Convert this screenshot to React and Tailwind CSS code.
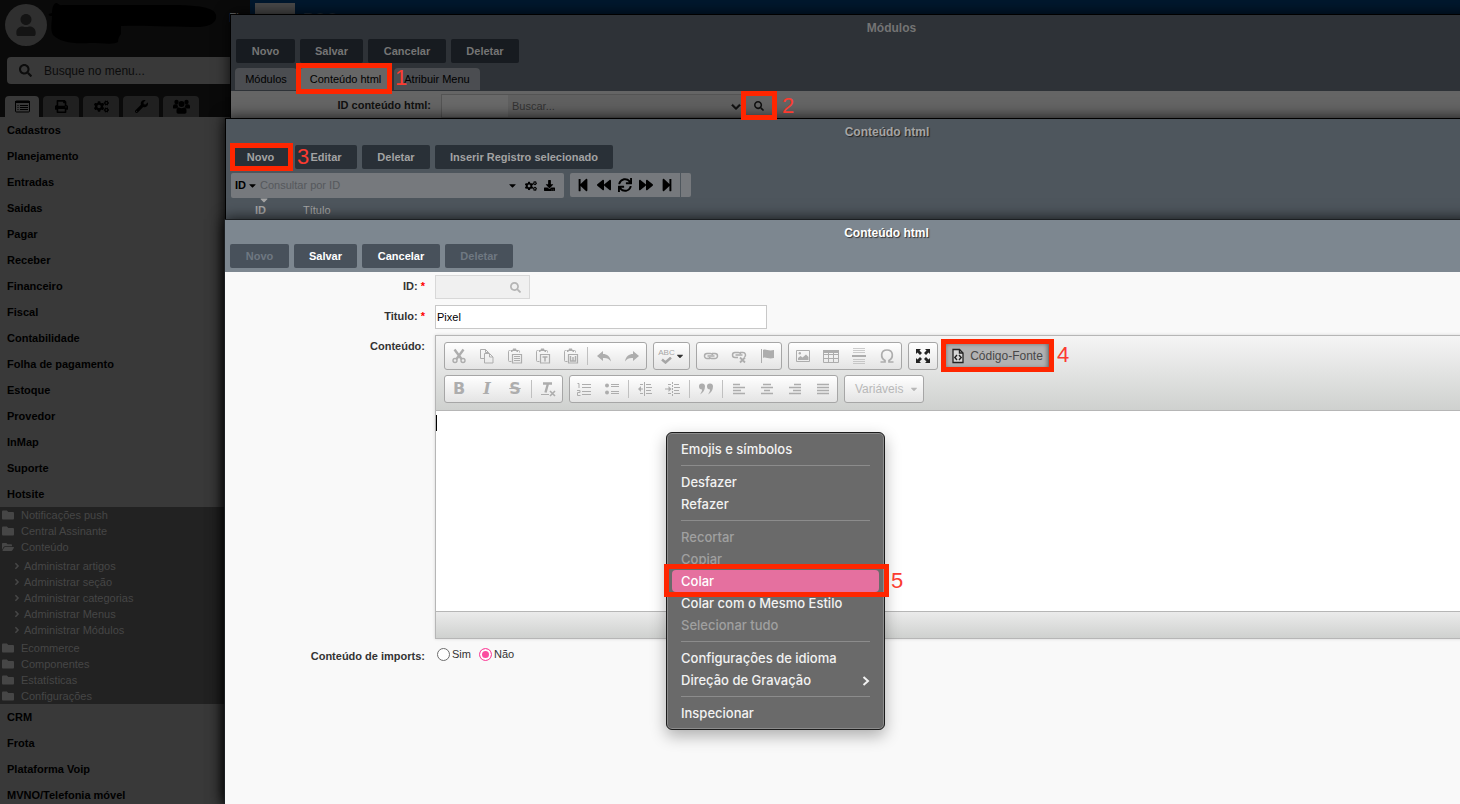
import React, { useState } from 'react';
import clsx from 'clsx';
import {
  FaAngleRight,
  FaBackward,
  FaCaretDown,
  FaChevronDown,
  FaCogs,
  FaDownload,
  FaFolder,
  FaFolderOpen,
  FaForward,
  FaPrint,
  FaSearch,
  FaStepBackward,
  FaStepForward,
  FaSync,
  FaUser,
  FaWrench,
} from 'react-icons/fa';

const menuTop = [
  'Cadastros',
  'Planejamento',
  'Entradas',
  'Saidas',
  'Pagar',
  'Receber',
  'Financeiro',
  'Fiscal',
  'Contabilidade',
  'Folha de pagamento',
  'Estoque',
  'Provedor',
  'InMap',
  'Suporte',
  'Hotsite',
];

const menuBottom = ['CRM', 'Frota', 'Plataforma Voip', 'MVNO/Telefonia móvel'];

const hotsite = [
  { label: 'Notificações push' },
  { label: 'Central Assinante' },
  {
    label: 'Conteúdo',
    items: [
      'Administrar artigos',
      'Administrar seção',
      'Administrar categorias',
      'Administrar Menus',
      'Administrar Módulos',
    ],
  },
  { label: 'Ecommerce' },
  { label: 'Componentes' },
  { label: 'Estatísticas' },
  { label: 'Configurações' },
];

const ListIcon = () => (
  <svg width="15" height="13" viewBox="0 0 15 13" fill="none" stroke="currentColor">
    <rect x=".5" y="1" width="14" height="11" rx="1" />
    <path d="M0 2h15" strokeWidth="2" />
    <path d="M2.500 5.500h1M2.500 7.500h1M2.500 9.500h1M5 5.500h8M5 7.500h8M5 9.500h8" />
  </svg>
);

const GroupIcon = () => (
  <svg width="17" height="15" viewBox="0 0 17 15" fill="currentColor">
    <circle cx="3.500" cy="3" r="2.200" />
    <circle cx="13.500" cy="3" r="2.200" />
    <circle cx="8.500" cy="5" r="3" />
    <path d="M0 9V7.500C0 6 1 5.300 2 5.300h2.500c0 1.500.5 2.500 1.200 3.200-.9 0-1.700.5-2.200 1H1a1 1 0 0 1-1-.5zM17 9V7.500c0-1.500-1-2.200-2-2.200h-2.500c0 1.500-.5 2.500-1.200 3.200.9 0 1.700.5 2.200 1H16a1 1 0 0 0 1-.5z" />
    <path d="M3.500 13v-1.500c0-1.800 1-2.900 2.500-2.900 1.600 1 3.400 1 5 0 1.500 0 2.500 1.100 2.500 2.900V13c0 1-.7 1.700-1.700 1.700H5.200c-1 0-1.700-.7-1.700-1.700z" />
  </svg>
);

const sidebarTabs = [
  { name: 'Menu', icon: <ListIcon /> },
  { name: 'Impressão', icon: <FaPrint size={13} /> },
  { name: 'Configurar', icon: <FaCogs size={15} /> },
  { name: 'Ferramentas', icon: <FaWrench size={13} /> },
  { name: 'Usuários', icon: <GroupIcon /> },
];

const contextMenu = [
  [{ label: 'Emojis e símbolos' }],
  [{ label: 'Desfazer' }, { label: 'Refazer' }],
  [
    { label: 'Recortar', off: true },
    { label: 'Copiar', off: true },
    { label: 'Colar', active: true },
    { label: 'Colar com o Mesmo Estilo' },
    { label: 'Selecionar tudo', off: true },
  ],
  [{ label: 'Configurações de idioma' }, { label: 'Direção de Gravação', more: true }],
  [{ label: 'Inspecionar' }],
];

/* ---------- editor icons ---------- */

const Svg = ({ children }) => (
  <svg width="16" height="16" viewBox="0 0 16 16" fill="none" stroke="currentColor">
    {children}
  </svg>
);

const Clipboard = ({ children }) => (
  <Svg>
    <path d="M3.500 2.500h-1a1 1 0 0 0-1 1v9a1 1 0 0 0 1 1h2M10.500 2.500h1a1 1 0 0 1 1 1v1" />
    <path d="M4 4V2h1.500l.5-1.500h3l.5 1.500H11v2H9.500V3h-4v1z" fill="currentColor" stroke="none" />
    <path d="M5.500 6.500h9v8.500h-9z" strokeWidth="1.200" />
    {children}
  </Svg>
);

const icons = {
  cut: (
    <Svg>
      <path d="M3.500 1.500 10.500 11M12.500 1.500 5.500 11" strokeWidth="2.400" />
      <circle cx="4" cy="12.500" r="2" strokeWidth="1.400" />
      <circle cx="12" cy="12.500" r="2" strokeWidth="1.400" />
    </Svg>
  ),
  copy: (
    <Svg>
      <path d="M5.500 10.500h-4v-9h5l3 3v1M6.500 1.500v3h3" />
      <path d="M5.500 5.500h5l3.500 3.500v6h-8.500zM10.500 5.500v3.500h3.500" />
    </Svg>
  ),
  paste: (
    <Clipboard>
      <path d="M7 8.500h6M7 10.500h6M7 12.500h6" />
    </Clipboard>
  ),
  pasteText: (
    <Clipboard>
      <path d="M7.500 9h5M10 9v4.500" strokeWidth="1.500" />
    </Clipboard>
  ),
  pasteWord: (
    <Clipboard>
      <path d="M7.500 8v5h5V8M10 9v4" strokeWidth="1.400" />
    </Clipboard>
  ),
  undo: (
    <Svg>
      <path d="M1 8l6-5v3c4 0 7 2 8 7.500-2-3-4.500-3.800-8-3.500v3z" fill="currentColor" stroke="none" />
    </Svg>
  ),
  redo: (
    <Svg>
      <path d="M15 8l-6-5v3c-4 0-7 2-8 7.500 2-3 4.500-3.800 8-3.500v3z" fill="currentColor" stroke="none" />
    </Svg>
  ),
  link: (
    <Svg>
      <path d="M7 10.500H4a2.500 2.500 0 0 1 0-5h3.500a2.500 2.500 0 0 1 2.200 1.500M9 5.500h3a2.500 2.500 0 0 1 0 5H8.500A2.500 2.500 0 0 1 6.300 9" strokeWidth="1.500" />
      <path d="M4.500 8h7" strokeWidth="1.500" />
    </Svg>
  ),
  unlink: (
    <Svg>
      <path d="M7 9.500H4a2.500 2.500 0 0 1 0-5h3.500a2.500 2.500 0 0 1 2.200 1.500M9 4.500h3a2.500 2.500 0 0 1 1.500 4.500M4.500 7h7" strokeWidth="1.500" />
      <path d="M9 9.500l5 5M14 9.500l-5 5" strokeWidth="1.800" />
    </Svg>
  ),
  flag: (
    <Svg>
      <path d="M2.500 1v14" />
      <path d="M4 2c3-1.500 5 1.500 11 0v8c-6 1.500-8-1.500-11 0z" fill="currentColor" stroke="none" />
    </Svg>
  ),
  image: (
    <Svg>
      <path d="M1.500 2.500h13v11h-13z" />
      <path d="M3 12v-2l2.500-2 2 1.500 3.500-3 2.500 2.500v3z" fill="currentColor" stroke="none" />
      <circle cx="4.800" cy="5.300" r="1.200" fill="currentColor" stroke="none" />
    </Svg>
  ),
  table: (
    <Svg>
      <path d="M.5 2.500h15v12H.5zM.5 6.500h15M.5 10.500h15M5.500 4v10M10.500 4v10" />
      <path d="M0 2h16v3H0z" fill="currentColor" stroke="none" />
    </Svg>
  ),
  rule: (
    <Svg>
      <path d="M2 .5h12M2 2.500h12M2 4.500h12M2 11.500h12M2 13.500h12M2 15.500h12" opacity="0.6" />
      <path d="M1 8h14" strokeWidth="2" />
    </Svg>
  ),
  omega: (
    <Svg>
      <path
        d="M1.500 14h4.500v-1.500C3.500 11 2.500 9 2.700 6.500 3 3.500 5.300 2 8 2s5 1.500 5.300 4.500c.2 2.500-.8 4.500-3.300 6V14h4.500"
        strokeWidth="1.700"
      />
    </Svg>
  ),
  expand: (
    <Svg>
      <path
        d="M1 1h5L4.500 2.500 7 5 5 7 2.500 4.500 1 6zM15 1v5l-1.500-1.500L11 7 9 5l2.500-2.500L10 1zM1 15v-5l1.500 1.500L5 9l2 2-2.500 2.500L6 15zM15 15h-5l1.500-1.500L9 11l2-2 2.500 2.500L15 10z"
        fill="currentColor"
        stroke="none"
      />
    </Svg>
  ),
  source: (
    <Svg>
      <path d="M3 1.500h6.500l3.500 3.500v9.500H3z" fill="#d8d8d8" strokeWidth="1.300" />
      <path d="M9.500 1.500V5H13M7 7 4.800 9.500 7 12M9 7l2.200 2.500L9 12" strokeWidth="1.400" />
    </Svg>
  ),
  numbered: (
    <Svg>
      <path d="M1.500 2.500H3v4.500M1 9.500h3v2H1.500v3h3" />
      <path d="M6 3.500h9M6 6.500h9M6 10.500h9M6 13.500h9" />
    </Svg>
  ),
  bulleted: (
    <Svg>
      <circle cx="3" cy="4.500" r="2" fill="currentColor" stroke="none" />
      <circle cx="3" cy="11.500" r="2" fill="currentColor" stroke="none" />
      <path d="M7 3.500h8M7 5.500h8M7 10.500h8M7 12.500h8" />
    </Svg>
  ),
  outdent: (
    <Svg>
      <path d="M7.500 1v14" />
      <path d="M9 3.500h5M9 6.500h6M9 9.500h5M9 12.500h6M2 8h4M3 3.500h3M3 12.500h3" />
      <path d="M4 5 1 8l3 3z" fill="currentColor" stroke="none" />
    </Svg>
  ),
  indent: (
    <Svg>
      <path d="M7.500 1v14" strokeDasharray="2 1" />
      <path d="M9 3.500h5M9 6.500h6M9 9.500h5M9 12.500h6M0 8h4M3 3.500h3M3 12.500h3" />
      <path d="M3.500 5l3 3-3 3z" fill="currentColor" stroke="none" />
    </Svg>
  ),
  quote: (
    <Svg>
      <path
        d="M1 5.500a3 3 0 0 1 6-.2C7 9 5 12 2 13.500c1.500-2 2-3.500 2-5a3 3 0 0 1-3-3zM9 5.500a3 3 0 0 1 6-.2c0 3.700-2 6.700-5 8.200 1.500-2 2-3.500 2-5a3 3 0 0 1-3-3z"
        fill="currentColor"
        stroke="none"
      />
    </Svg>
  ),
  left: (
    <Svg>
      <path d="M2 3.500h7M2 6.500h12M2 9.500h8M2 12.500h12" strokeWidth="1.600" />
    </Svg>
  ),
  center: (
    <Svg>
      <path d="M4 3.500h8M2 6.500h12M5 9.500h6M2 12.500h12" strokeWidth="1.600" />
    </Svg>
  ),
  right: (
    <Svg>
      <path d="M7 3.500h7M2 6.500h12M6 9.500h8M2 12.500h12" strokeWidth="1.600" />
    </Svg>
  ),
  justify: (
    <Svg>
      <path d="M2 3.500h12M2 6.500h12M2 9.500h12M2 12.500h12" strokeWidth="1.600" />
    </Svg>
  ),
  bold: <span className="font-['DejaVu_Sans'] text-base leading-4 font-bold">B</span>,
  italic: <span className="font-['DejaVu_Serif'] text-base leading-4 font-bold italic">I</span>,
  strike: <span className="font-['DejaVu_Sans'] text-base leading-4 font-bold line-through">S</span>,
  clear: (
    <Svg>
      <path d="M3 2.500h9M8 2.500l-2.500 9" strokeWidth="2.400" />
      <path d="M1 13.500h8" />
      <path d="M10 10l5 5M15 10l-5 5" strokeWidth="1.600" />
    </Svg>
  ),
};

const Tool = ({ name, title, dark }) => (
  <button
    type="button"
    aria-label={title}
    className={clsx(
      'flex h-[26px] w-7 items-center justify-center',
      dark ? 'text-[#222222]' : 'text-[#adadad]',
    )}
  >
    {icons[name]}
  </button>
);

const ToolGroup = ({ children }) => (
  <div className="flex h-7 items-center rounded-[3px] border border-[#a6a6a6] bg-linear-to-b from-white to-[#e4e4e4]">
    {children}
  </div>
);

const Sep = () => <span className="mx-[2px] h-[18px] w-px bg-[#c0c0c0]" />;

/* ---------- window parts ---------- */

const WindowTitle = ({ children, className }) => (
  <h2 className={clsx('pt-[5px] text-center text-xs leading-4 font-bold', className)}>{children}</h2>
);

const ActionButton = ({ children, className, disabled }) => (
  <button
    type="button"
    disabled={disabled}
    className={clsx('h-6 rounded-xs text-[11px] font-bold whitespace-nowrap', className)}
  >
    {children}
  </button>
);

const Marker = ({ box, number, place }) => (
  <>
    <div className={clsx('pointer-events-none absolute z-40 border-5 border-[#ff2600]', box)} />
    <span
      className={clsx(
        'pointer-events-none absolute z-40 text-[22px] leading-6 text-[#fb3b30]',
        place,
      )}
    >
      {number}
    </span>
  </>
);

const Sidebar = () => (
  <aside className="flex w-[250px] shrink-0 flex-col bg-[#0a0a0a]">
    <div className="relative h-[57px] shrink-0">
      <div className="ml-[5px] pt-1">
        <div className="flex size-[42px] items-center justify-center rounded-full bg-[#2f2f2f] text-[#141414]">
          <FaUser size={22} />
        </div>
      </div>
      <svg className="absolute top-0 left-12" width="175" height="48" viewBox="0 0 175 48">
        <path
          d="M8 3c2 0 3 3 6 2h118c14 1 34 1 36 10 1 8-6 11-16 12-26 0-56-2-79-1v8c-2 2-3 5-3 8-4 3-16 1-28 1-18 1-30-1-37-8-3-6-1-13-1-19-4 0-5-2 0-3 0-4 1-9 4-10z"
          fill="#000"
        />
      </svg>
      <span className="absolute top-[10px] left-[229px] text-xs text-[#6b6b6b]">Fi</span>
    </div>
    <label className="ml-[7px] flex h-[27px] shrink-0 items-center gap-3 rounded-l-sm bg-[#393939] pl-3 text-[#0c0c0c]">
      <FaSearch size={13} />
      <input
        type="text"
        aria-label="Busque no menu"
        placeholder="Busque no menu..."
        className="w-40 bg-transparent text-xs outline-none placeholder:text-[#0c0c0c]"
      />
    </label>
    <div className="mt-3 flex h-[21px] shrink-0 gap-1 pl-[5px]">
      {sidebarTabs.map((tab, i) => (
        <button
          key={tab.name}
          type="button"
          aria-label={tab.name}
          className={clsx(
            'flex items-center justify-center rounded-t-sm text-black',
            i === 0 ? 'w-[34px] bg-[#393939]' : 'w-9 bg-[#202020]',
          )}
        >
          {tab.icon}
        </button>
      ))}
    </div>
    <nav className="flex-1 bg-[#393939] text-[11px] text-black">
      {menuTop.map((item) => (
        <a key={item} href="#" className="block h-[26px] pl-[7px] leading-[26px] font-bold">
          {item}
        </a>
      ))}
      <div className="bg-[#222222] text-[#464646]">
        {hotsite.map((folder) => (
          <div key={folder.label}>
            <a href="#" className="flex h-4 items-center gap-[7px] pl-[2px]">
              {folder.items ? <FaFolderOpen size={12} /> : <FaFolder size={12} />}
              {folder.label}
            </a>
            {folder.items && (
              <div className="pt-[3px] pb-[2px]">
                {folder.items.map((sub) => (
                  <a key={sub} href="#" className="flex h-4 items-center gap-[2px] pl-3">
                    <FaAngleRight size={10} />
                    {sub}
                  </a>
                ))}
              </div>
            )}
          </div>
        ))}
      </div>
      {menuBottom.map((item) => (
        <a key={item} href="#" className="block h-[26px] pl-[7px] leading-[26px] font-bold">
          {item}
        </a>
      ))}
    </nav>
  </aside>
);

const ModulesWindow = () => {
  const button = 'bg-[#171b20] text-[#757575]';
  return (
    <section className="absolute top-[14px] -right-[93px] bottom-0 left-[230px] border border-black bg-[#2e3237] shadow-[0_0_14px_rgba(0,0,0,0.8)]">
      <WindowTitle className="text-[#747474]">Módulos</WindowTitle>
      <div className="mt-[3px] flex gap-[5px] pl-[5px]">
        <ActionButton className={clsx(button, 'w-[59px]')}>Novo</ActionButton>
        <ActionButton className={clsx(button, 'w-[63px]')}>Salvar</ActionButton>
        <ActionButton className={clsx(button, 'w-[78px]')}>Cancelar</ActionButton>
        <ActionButton className={clsx(button, 'w-[68px]')}>Deletar</ActionButton>
      </div>
      <div className="mt-[5px] flex gap-[2px] pl-1 text-[11px] text-black">
        <button type="button" className="h-[22px] w-[62px] rounded-t-sm bg-[#4b4d51]">
          Módulos
        </button>
        <button type="button" className="h-[23px] w-[93px] rounded-t-sm bg-[#666666]">
          Conteúdo html
        </button>
        <button type="button" className="h-[22px] w-[86px] rounded-t-sm bg-[#4b4d51]">
          Atribuir Menu
        </button>
      </div>
      <div className="flex h-[200px] items-start bg-[#656565] pt-[3px] text-[11px]">
        <label htmlFor="id-html" className="w-[200px] text-right leading-[22px] font-bold text-[#111111]">
          ID conteúdo html:
        </label>
        <div className="ml-[10px] flex border border-[#545454]">
          <input id="id-html" type="text" className="h-[22px] w-[66px] bg-[#696969] outline-none" />
          <div className="relative">
            <select
              aria-label="Buscar conteúdo"
              className="h-[22px] w-[234px] appearance-none bg-[#606060] pl-1 text-[#333333] outline-none"
            >
              <option>Buscar...</option>
            </select>
            <FaChevronDown
              size={10}
              stroke="currentColor"
              strokeWidth={30}
              className="pointer-events-none absolute top-[7px] right-px text-[#111111]"
            />
          </div>
          <button type="button" aria-label="Pesquisar" className="flex h-[22px] w-[34px] items-center justify-center text-[#111111]">
            <FaSearch size={10} />
          </button>
        </div>
      </div>
    </section>
  );
};

const ListWindow = () => {
  const button = 'bg-[#293037] text-[#a3a3a3]';
  return (
    <section className="absolute top-[118px] -right-[89px] bottom-0 left-[225px] border border-black bg-[#4e565d] shadow-[0_0_14px_rgba(0,0,0,0.8)]">
      <WindowTitle className="text-[#a5a5a5] text-shadow-[1px_1px_1px_#222]">Conteúdo html</WindowTitle>
      <div className="mt-[5px] flex gap-[5px] pl-[5px]">
        <ActionButton className={clsx(button, 'w-[59px]')}>Novo</ActionButton>
        <ActionButton className={clsx(button, 'w-[62px]')}>Editar</ActionButton>
        <ActionButton className={clsx(button, 'w-[68px]')}>Deletar</ActionButton>
        <ActionButton className={clsx(button, 'w-[178px]')}>Inserir Registro selecionado</ActionButton>
      </div>
      <div className="mt-1 flex gap-[6px] pl-[5px] text-black">
        <div className="flex h-[25px] w-[333px] items-center rounded-xs bg-[#76797d] px-1 text-[11px]">
          <button type="button" className="flex items-center gap-px font-bold">
            ID <FaCaretDown size={11} />
          </button>
          <input
            type="text"
            aria-label="Consultar por ID"
            placeholder="Consultar por ID"
            className="min-w-0 flex-1 bg-transparent pl-[2px] outline-none placeholder:text-[#55585c]"
          />
          <div className="flex items-center gap-[7px] pr-[5px]">
            <FaCaretDown size={11} />
            <FaCogs size={12} />
            <FaDownload size={11} />
          </div>
        </div>
        <div className="flex h-6 items-center rounded-xs bg-[#76797d]">
          <div className="flex w-[110px] items-center justify-between px-[6px]">
            <button type="button" aria-label="Primeiro"><FaStepBackward size={14} /></button>
            <button type="button" aria-label="Anterior"><FaBackward size={14} /></button>
            <button type="button" aria-label="Atualizar"><FaSync size={14} /></button>
            <button type="button" aria-label="Próximo"><FaForward size={14} /></button>
            <button type="button" aria-label="Último"><FaStepForward size={14} /></button>
          </div>
          <span className="h-full w-[11px] border-l border-[#4e565d]" />
        </div>
      </div>
      <FaCaretDown size={12} className="-mt-1 -mb-[2px] ml-8 text-[#a5a5a5]" />
      <table className="text-[11px] leading-3 text-[#a5a5a5]">
        <thead>
          <tr>
            <th className="w-[77px] pl-[29px] text-left font-bold">ID</th>
            <th className="text-left font-normal">Título</th>
          </tr>
        </thead>
      </table>
    </section>
  );
};

const Editor = () => (
  <div className="flex-1 border border-[#b6b6b6] bg-white shadow-[0_0_3px_rgba(0,0,0,0.15)]">
    <div className="border-b border-[#b6b6b6] bg-linear-to-b from-[#f5f5f5] to-[#cfd1cf] px-2 pt-[6px] pb-[7px]">
      <div className="flex gap-[6px]">
        <ToolGroup>
          <Tool name="cut" title="Recortar" />
          <Tool name="copy" title="Copiar" />
          <Tool name="paste" title="Colar" />
          <Tool name="pasteText" title="Colar como Texto" />
          <Tool name="pasteWord" title="Colar do Word" />
          <Sep />
          <Tool name="undo" title="Desfazer" />
          <Tool name="redo" title="Refazer" />
        </ToolGroup>
        <ToolGroup>
          <button type="button" aria-label="Verificar ortografia" className="flex h-[26px] w-[35px] items-center justify-center text-[#a6a6a6]">
            <span className="flex flex-col items-center">
              <span className="text-[8px] leading-[8px]">ABC</span>
              <svg width="11" height="7" viewBox="0 0 11 7" fill="none" stroke="currentColor" strokeWidth="2.500">
                <path d="M1 2.500 4.500 5.500 10 .5" />
              </svg>
            </span>
            <FaCaretDown size={10} className="text-[#333333]" />
          </button>
        </ToolGroup>
        <ToolGroup>
          <Tool name="link" title="Inserir link" />
          <Tool name="unlink" title="Remover link" />
          <Tool name="flag" title="Âncora" />
        </ToolGroup>
        <ToolGroup>
          <Tool name="image" title="Imagem" />
          <Tool name="table" title="Tabela" />
          <Tool name="rule" title="Linha horizontal" />
          <Tool name="omega" title="Caractere especial" />
        </ToolGroup>
        <ToolGroup>
          <Tool name="expand" title="Maximizar" dark />
        </ToolGroup>
        <button
          type="button"
          className="flex h-7 w-[105px] items-center justify-center gap-1 border border-[#777777] bg-[#b2b2b2] text-xs text-[#484848] shadow-[inset_0_0_5px_rgba(0,0,0,0.5)]"
        >
          <span className="text-[#222222]">{icons.source}</span>
          Código-Fonte
        </button>
      </div>
      <div className="mt-[5px] flex gap-[6px]">
        <ToolGroup>
          <Tool name="bold" title="Negrito" />
          <Tool name="italic" title="Itálico" />
          <Tool name="strike" title="Tachado" />
          <Sep />
          <Tool name="clear" title="Remover formatação" />
        </ToolGroup>
        <ToolGroup>
          <Tool name="numbered" title="Lista numerada" />
          <Tool name="bulleted" title="Lista sem números" />
          <Sep />
          <Tool name="outdent" title="Diminuir recuo" />
          <Tool name="indent" title="Aumentar recuo" />
          <Sep />
          <Tool name="quote" title="Citação" />
          <Sep />
          <Tool name="left" title="Alinhar à esquerda" />
          <Tool name="center" title="Centralizar" />
          <Tool name="right" title="Alinhar à direita" />
          <Tool name="justify" title="Justificado" />
        </ToolGroup>
        <ToolGroup>
          <button type="button" className="flex h-[26px] w-[78px] items-center justify-between pr-1 pl-[10px] text-xs text-[#b8b8b8]">
            Variáveis <FaCaretDown size={10} />
          </button>
        </ToolGroup>
      </div>
    </div>
    <div className="relative">
      <textarea
        id="conteudo"
        className="block h-[200px] w-full resize-none bg-white px-1 outline-none"
      />
      <span className="absolute top-1 left-0 h-4 w-px bg-black" />
    </div>
    <div className="h-[27px] border-t border-[#b6b6b6] bg-linear-to-b from-[#ebebeb] to-[#cfd1cf]" />
  </div>
);

const FormRow = ({ label, htmlFor, required, children }) => (
  <div className="flex gap-[10px]">
    <label htmlFor={htmlFor} className="w-[200px] shrink-0 text-right leading-[22px] font-bold text-[#333333]">
      {label}:{required && <span className="text-[#ff0000]"> *</span>}
    </label>
    {children}
  </div>
);

const FormWindow = () => {
  const [title, setTitle] = useState('Pixel');
  const [imports, setImports] = useState('nao');
  const button = 'bg-[#48515b]';
  const radio =
    'size-[13px] appearance-none rounded-full border border-[#6e6e6e] bg-white checked:border-[#fb4ea0] checked:bg-[#fb4ea0] checked:shadow-[inset_0_0_0_2px_white]';

  return (
    <section className="absolute top-[219px] -right-[88px] bottom-0 left-[224px] border-t border-l border-[#1c1f22] bg-[#f9f9f9] text-[11px] shadow-[0_0_14px_rgba(0,0,0,0.8)]">
      <header className="bg-[#7d8790] pb-1">
        <WindowTitle className="text-white text-shadow-[1px_1px_1px_#333]">Conteúdo html</WindowTitle>
        <div className="mt-[3px] flex gap-[5px] pl-[5px]">
          <ActionButton disabled className={clsx(button, 'w-[59px] text-[#6f7882]')}>Novo</ActionButton>
          <ActionButton className={clsx(button, 'w-[63px] text-white')}>Salvar</ActionButton>
          <ActionButton className={clsx(button, 'w-[78px] text-white')}>Cancelar</ActionButton>
          <ActionButton disabled className={clsx(button, 'w-[68px] text-[#6f7882]')}>Deletar</ActionButton>
        </div>
      </header>
      <form className="flex flex-col gap-[6px] pt-[3px]">
        <FormRow label="ID" htmlFor="registro" required>
          <div className="flex h-6 w-[95px] items-center border border-[#d8d8d8] bg-[#f0f0f0] pr-2">
            <input id="registro" type="text" disabled className="min-w-0 flex-1" />
            <FaSearch size={11} className="text-[#b5b5b5]" />
          </div>
        </FormRow>
        <FormRow label="Titulo" htmlFor="titulo" required>
          <input
            id="titulo"
            type="text"
            value={title}
            onChange={(e) => setTitle(e.target.value)}
            className="h-6 w-[332px] border border-[#c8c8c8] bg-white px-px text-black outline-none"
          />
        </FormRow>
        <FormRow label="Conteúdo" htmlFor="conteudo">
          <Editor />
        </FormRow>
        <FormRow label="Conteúdo de imports" htmlFor="imports-sim">
          <div className="ml-[2px] flex h-[18px] items-center gap-2 text-[#333333]">
            <label className="flex items-center gap-[2px]">
              <input
                id="imports-sim"
                type="radio"
                name="imports"
                checked={imports === 'sim'}
                onChange={() => setImports('sim')}
                className={radio}
              />
              Sim
            </label>
            <label className="flex items-center gap-[2px]">
              <input
                type="radio"
                name="imports"
                checked={imports === 'nao'}
                onChange={() => setImports('nao')}
                className={radio}
              />
              Não
            </label>
          </div>
        </FormRow>
      </form>
    </section>
  );
};

const ContextMenu = () => (
  <div
    role="menu"
    className="absolute top-[432px] left-[666px] z-30 w-[219px] rounded-md border border-[#1c1c1c] bg-[#6a6a6a] px-[5px] py-[5px] font-[Inter,sans-serif] text-[13px] font-medium text-[#f2f2f2] shadow-[inset_0_0_0_1px_#8c8c8c,0_6px_16px_rgba(0,0,0,0.3)]"
  >
    {contextMenu.map((group, i) => (
      <div key={group[0].label}>
        {i > 0 && <hr className="mx-[9px] my-[5px] border-[#8c8c8c]" />}
        {group.map((item) => (
          <button
            key={item.label}
            type="button"
            role="menuitem"
            className={clsx(
              'flex h-[22px] w-full items-center justify-between rounded-sm px-[9px] pt-[2px]',
              item.active && 'bg-[#e5709f] text-white',
              item.off && 'text-[#a0a0a0]',
            )}
          >
            {item.label}
            {item.more && (
              <svg width="8" height="10" viewBox="0 0 8 10" fill="none" stroke="currentColor" strokeWidth="2">
                <path d="M1.500 1 6 5 1.500 9" />
              </svg>
            )}
          </button>
        ))}
      </div>
    ))}
  </div>
);

const App = () => {
  return (
    <div className="relative flex h-screen overflow-hidden bg-[#0a0a0a] font-['Liberation_Sans',Arial,sans-serif]">
      <Sidebar />
      <header className="flex h-12 flex-1 gap-2 bg-[#00182e] pl-[5px]">
        <div className="mt-[3px] h-10 w-10 bg-[#4a4a4a]" />
        <span className="mt-2 text-base font-bold text-[#1f2d3a]">POO</span>
      </header>

      <ModulesWindow />
      <ListWindow />
      <FormWindow />
      <ContextMenu />

      {/* Numbered steps */}
      <Marker box="left-[296px] top-[63px] h-[31px] w-24" number="1" place="left-[395px] top-[66px]" />
      <Marker box="left-[741px] top-[91px] h-[29px] w-9" number="2" place="left-[782px] top-[94px]" />
      <Marker box="left-[230px] top-[143px] h-7 w-[63px]" number="3" place="left-[297px] top-[145px]" />
      <Marker box="left-[941px] top-[339px] h-[33px] w-[113px]" number="4" place="left-[1057px] top-[343px]" />
      <Marker box="left-[664px] top-[564px] h-[33px] w-[225px]" number="5" place="left-[891px] top-[569px]" />
    </div>
  );
};

export default App;
